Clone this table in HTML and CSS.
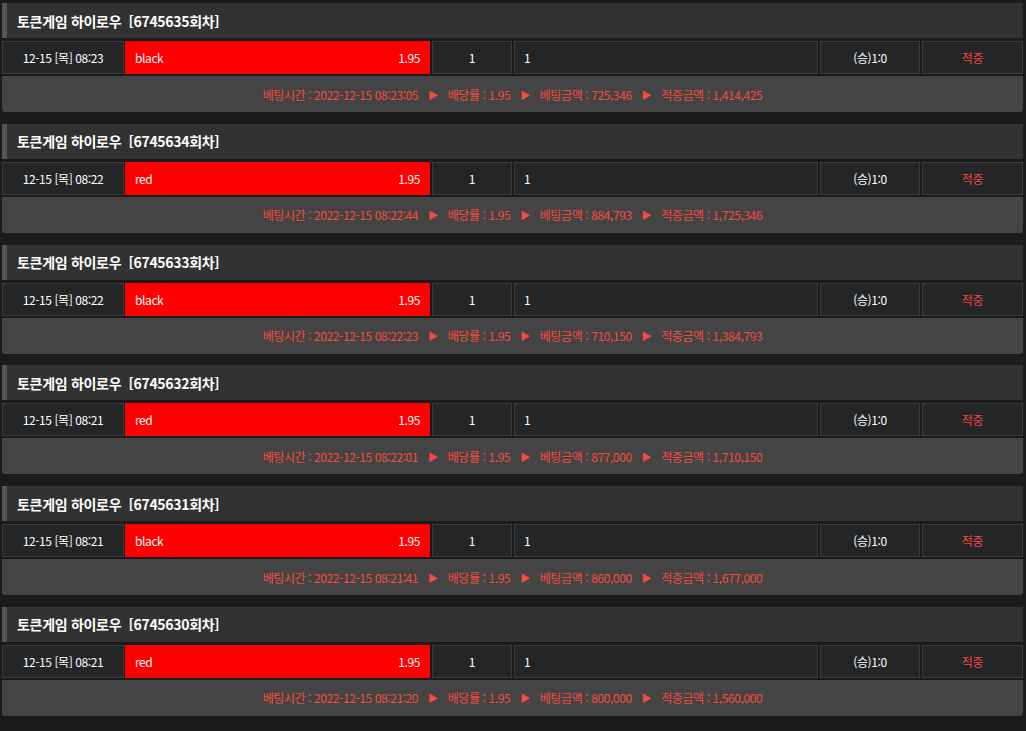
FILE: index.html
```html
<!DOCTYPE html>
<html lang="ko">
<head>
    <meta charset="UTF-8">
    <meta name="viewport" content="width=device-width, initial-scale=1.0">
    <title>베팅내역</title>
    <link rel="stylesheet" href="styles.css">
</head>
<body>
    <div class="list">
        <div class="bet">
            <div class="bet-title">토큰게임 하이로우&nbsp; [6745635회차]</div>
            <div class="bet-row">
                <div class="cell c-date">12-15 [목] 08:23</div>
                <div class="cell c-pick"><span>black</span><span>1.95</span></div>
                <div class="cell c-cnt">1</div>
                <div class="cell c-val">1</div>
                <div class="cell c-score">(승)1:0</div>
                <div class="cell c-result">적중</div>
            </div>
            <div class="bet-info">베팅시간 : 2022-12-15 08:23:05 <i>▶</i> 배당률 : 1.95 <i>▶</i> 베팅금액 : 725,346 <i>▶</i> 적중금액 : 1,414,425</div>
        </div>
        <div class="bet">
            <div class="bet-title">토큰게임 하이로우&nbsp; [6745634회차]</div>
            <div class="bet-row">
                <div class="cell c-date">12-15 [목] 08:22</div>
                <div class="cell c-pick"><span>red</span><span>1.95</span></div>
                <div class="cell c-cnt">1</div>
                <div class="cell c-val">1</div>
                <div class="cell c-score">(승)1:0</div>
                <div class="cell c-result">적중</div>
            </div>
            <div class="bet-info">베팅시간 : 2022-12-15 08:22:44 <i>▶</i> 배당률 : 1.95 <i>▶</i> 베팅금액 : 884,793 <i>▶</i> 적중금액 : 1,725,346</div>
        </div>
        <div class="bet">
            <div class="bet-title">토큰게임 하이로우&nbsp; [6745633회차]</div>
            <div class="bet-row">
                <div class="cell c-date">12-15 [목] 08:22</div>
                <div class="cell c-pick"><span>black</span><span>1.95</span></div>
                <div class="cell c-cnt">1</div>
                <div class="cell c-val">1</div>
                <div class="cell c-score">(승)1:0</div>
                <div class="cell c-result">적중</div>
            </div>
            <div class="bet-info">베팅시간 : 2022-12-15 08:22:23 <i>▶</i> 배당률 : 1.95 <i>▶</i> 베팅금액 : 710,150 <i>▶</i> 적중금액 : 1,384,793</div>
        </div>
        <div class="bet">
            <div class="bet-title">토큰게임 하이로우&nbsp; [6745632회차]</div>
            <div class="bet-row">
                <div class="cell c-date">12-15 [목] 08:21</div>
                <div class="cell c-pick"><span>red</span><span>1.95</span></div>
                <div class="cell c-cnt">1</div>
                <div class="cell c-val">1</div>
                <div class="cell c-score">(승)1:0</div>
                <div class="cell c-result">적중</div>
            </div>
            <div class="bet-info">베팅시간 : 2022-12-15 08:22:01 <i>▶</i> 배당률 : 1.95 <i>▶</i> 베팅금액 : 877,000 <i>▶</i> 적중금액 : 1,710,150</div>
        </div>
        <div class="bet">
            <div class="bet-title">토큰게임 하이로우&nbsp; [6745631회차]</div>
            <div class="bet-row">
                <div class="cell c-date">12-15 [목] 08:21</div>
                <div class="cell c-pick"><span>black</span><span>1.95</span></div>
                <div class="cell c-cnt">1</div>
                <div class="cell c-val">1</div>
                <div class="cell c-score">(승)1:0</div>
                <div class="cell c-result">적중</div>
            </div>
            <div class="bet-info">베팅시간 : 2022-12-15 08:21:41 <i>▶</i> 배당률 : 1.95 <i>▶</i> 베팅금액 : 860,000 <i>▶</i> 적중금액 : 1,677,000</div>
        </div>
        <div class="bet">
            <div class="bet-title">토큰게임 하이로우&nbsp; [6745630회차]</div>
            <div class="bet-row">
                <div class="cell c-date">12-15 [목] 08:21</div>
                <div class="cell c-pick"><span>red</span><span>1.95</span></div>
                <div class="cell c-cnt">1</div>
                <div class="cell c-val">1</div>
                <div class="cell c-score">(승)1:0</div>
                <div class="cell c-result">적중</div>
            </div>
            <div class="bet-info">베팅시간 : 2022-12-15 08:21:20 <i>▶</i> 배당률 : 1.95 <i>▶</i> 베팅금액 : 800,000 <i>▶</i> 적중금액 : 1,560,000</div>
        </div>
    </div>
</body>
</html>
```

FILE: styles.css
```css
body {
    margin: 0;
    background-color: #1b1b1b;
    font-family: "Noto Sans CJK KR", "Noto Sans", sans-serif;
    font-size: 12px;
    color: #fff;
}
.list {
    padding: 3px 3px 0 2px;
}
.bet {
    margin-bottom: 11.8px;
}
.bet-title {
    height: 35px;
    display: flex;
    align-items: center;
    padding-left: 10px;
    border-left: 5px solid #555;
    background-color: #323232;
    font-size: 14px;
    font-weight: bold;
    letter-spacing: -0.3px;
}
.bet-row {
    display: flex;
    gap: 2px;
    height: 33px;
    margin-top: 3px;
    letter-spacing: -0.4px;
}
.cell {
    box-sizing: border-box;
    display: flex;
    align-items: center;
    justify-content: center;
    background-color: #232527;
    border: 1px solid #3a3b3c;
}
.c-date {
    width: 122px;
    margin-right: -1px;
}
.c-pick {
    width: 305px;
    justify-content: space-between;
    padding: 0 9px;
    background-color: #ff0000;
    border-color: #ff0000;
}
.c-cnt {
    width: 80px;
}
.c-val {
    width: 304px;
    justify-content: flex-start;
    padding-left: 9px;
}
.c-score {
    width: 100px;
}
.c-result {
    flex: 1;
    color: #f4473c;
}
.bet-info {
    height: 36px;
    margin-top: 2px;
    display: flex;
    align-items: center;
    justify-content: center;
    background-color: #444;
    border-radius: 0 0 3px 3px;
    color: #f64a3e;
    white-space: pre;
    letter-spacing: -0.4px;
}
.bet-info i {
    font-style: normal;
    font-size: 10px;
    margin: 0 7px;
}
```
